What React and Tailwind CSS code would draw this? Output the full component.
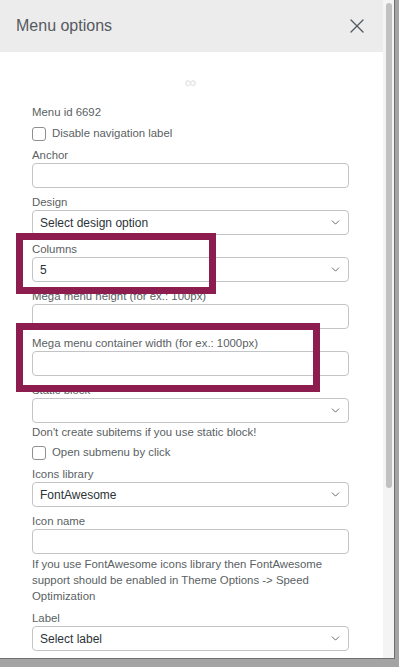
import { X, ChevronDown } from "lucide-react";

const font = { fontFamily: '"Liberation Sans", Arial, sans-serif' };

function Label({ children }) {
  return (
    <div className="h-[14px] leading-[14px] text-[11.4px] text-[#5a5f64] whitespace-nowrap mb-[1px]">
      {children}
    </div>
  );
}

function TextInput() {
  return (
    <div className="h-[25px] rounded-[4px] border border-[#c3c4c7] bg-white" />
  );
}

function Select({ value }) {
  return (
    <div className="h-[25px] rounded-[4px] border border-[#c3c4c7] bg-white flex items-center justify-between pl-[7px] pr-[6px]">
      <span className="text-[12px] text-[#2c3338]">{value}</span>
      <ChevronDown size={13} strokeWidth={1.6} className="text-[#50575e]" />
    </div>
  );
}

function Field({ label, select, value }) {
  return (
    <div className="mt-[7px]">
      <Label>{label}</Label>
      {select ? <Select value={value} /> : <TextInput />}
    </div>
  );
}

function Check({ children, className }) {
  return (
    <div className={"flex items-center h-[14px] " + className}>
      <span className="w-[14px] h-[14px] rounded-[3px] border border-[#8c8f94] bg-white" />
      <span className="ml-[6px] text-[11.4px] text-[#5a5f64]">{children}</span>
    </div>
  );
}

export default function App() {
  return (
    <div className="w-[399px] h-[667px] bg-[#a4a4a4] overflow-hidden" style={font}>
      <div className="w-[395px] h-[659px] flex bg-white border-r border-b border-[#6e6e6e]">
        {/* panel */}
        <div className="w-[383px] flex flex-col">
          <div className="h-[52px] bg-[#ececec] flex items-center justify-between pl-4 pr-[14px]">
            <span className="text-[16px] text-[#555a5f]">Menu options</span>
            <X size={24} strokeWidth={1.3} className="text-[#50575e]" />
          </div>

          <div className="relative pl-8 pr-[34px]">
            <div className="mt-[23px] h-[16px] flex justify-center items-center text-[16px] text-[#e2e2e2] leading-none">
              ∞
            </div>

            <div className="mt-[14px] h-[14px] leading-[14px] text-[11.4px] text-[#5a5f64]">
              Menu id 6692
            </div>

            <Check className="mt-[8px]">Disable navigation label</Check>

            <div className="mt-[1px]">
              <Field label="Anchor" />
              <Field label="Design" select value="Select design option" />
              <Field label="Columns" select value="5" />
              <Field label="Mega menu height (for ex.: 100px)" />
              <Field label="Mega menu container width (for ex.: 1000px)" />
              <Field label="Static block" select value="" />
            </div>

            <div className="mt-[2px] h-[14px] leading-[14px] text-[11.4px] text-[#5a5f64]">
              Don't create subitems if you use static block!
            </div>

            <Check className="mt-[7px]">Open submenu by click</Check>

            <div className="mt-[3px]">
              <Field label="Icons library" select value="FontAwesome" />
              <Field label="Icon name" />
            </div>

            <p className="mt-[2px] text-[11.4px] leading-[16px] text-[#5a5f64] pr-4">
              If you use FontAwesome icons library then FontAwesome support should be enabled in Theme Options -&gt; Speed Optimization
            </p>

            <Field label="Label" select value="Select label" />

            {/* highlight boxes */}
            <div className="absolute left-[16px] top-[181px] w-[200px] h-[61px] border-[7px] border-[#8d1d4f]" />
            <div className="absolute left-[16px] top-[271px] w-[304px] h-[69px] border-[7px] border-[#8d1d4f]" />
          </div>
        </div>

        {/* scrollbar */}
        <div className="w-[11px] bg-[#f4f4f4] pl-[3px] pt-[3px]">
          <div className="w-[6px] h-[485px] rounded-full bg-[#c1c1c1]" />
        </div>
      </div>
    </div>
  );
}
